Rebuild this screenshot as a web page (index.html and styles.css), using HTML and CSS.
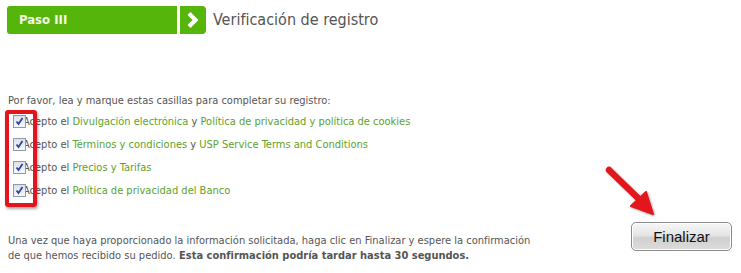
FILE: index.html
```html
<!DOCTYPE html>
<html lang="es">
<head>
<meta charset="utf-8">
<link rel="stylesheet" href="styles.css">
</head>
<body>
<div class="page">
  <div class="step">
    <div class="step-label">Paso III</div>
    <div class="step-arrow">
      <svg width="26" height="28" viewBox="0 0 26 28"><path d="M9 7.5 L15.5 14 L9 20.5" fill="none" stroke="#fff" stroke-width="4.2" stroke-linecap="butt" stroke-linejoin="miter"/></svg>
    </div>
    <div class="step-title">Verificación de registro</div>
  </div>

  <p class="intro">Por favor, lea y marque estas casillas para completar su registro:</p>
  <div class="checks">
    <label class="row"><span class="cb"><svg width="11" height="11" viewBox="0 0 11 11"><path d="M2.5 5.5 L4.5 8 L8.5 2" fill="none" stroke="#2a45a0" stroke-width="1.8"/></svg></span>Acepto el <a>Divulgación electrónica</a> y <a>Política de privacidad y política de cookies</a></label>
    <label class="row"><span class="cb"><svg width="11" height="11" viewBox="0 0 11 11"><path d="M2.5 5.5 L4.5 8 L8.5 2" fill="none" stroke="#2a45a0" stroke-width="1.8"/></svg></span>Acepto el <a>Términos y condiciones</a> y <a>USP Service Terms and Conditions</a></label>
    <label class="row"><span class="cb"><svg width="11" height="11" viewBox="0 0 11 11"><path d="M2.5 5.5 L4.5 8 L8.5 2" fill="none" stroke="#2a45a0" stroke-width="1.8"/></svg></span>Acepto el <a>Precios y Tarifas</a></label>
    <label class="row"><span class="cb"><svg width="11" height="11" viewBox="0 0 11 11"><path d="M2.5 5.5 L4.5 8 L8.5 2" fill="none" stroke="#2a45a0" stroke-width="1.8"/></svg></span>Acepto el <a>Política de privacidad del Banco</a></label>
    <div class="redbox"></div>
  </div>

  <div class="footer">
    <p class="note">Una vez que haya proporcionado la información solicitada, haga clic en Finalizar y espere la confirmación de que hemos recibido su pedido.<b> Esta confirmación podría tardar hasta 30 segundos.</b></p>
    <button class="finish">Finalizar</button>
    <svg class="arrow" width="60" height="60" viewBox="0 0 60 60">
      <defs><filter id="sh" x="-20%" y="-20%" width="140%" height="140%"><feDropShadow dx="1" dy="1" stdDeviation="1" flood-color="#000" flood-opacity="0.35"/></filter></defs>
      <g filter="url(#sh)">
        <path d="M6 6 L38 37" stroke="#e3131b" stroke-width="6.5" stroke-linecap="round"/>
        <path d="M28 42 L50 50 L43 28 Z" fill="#e3131b" stroke="#e3131b" stroke-width="2" stroke-linejoin="round"/>
      </g>
    </svg>
  </div>
</div>
</body>
</html>
```
FILE: styles.css
```css
* { box-sizing: border-box; }
html, body { margin: 0; padding: 0; background: #fff; }
body { font-family: "DejaVu Sans Condensed", "DejaVu Sans", sans-serif; color: #555; font-size: 11px; }
.page { position: relative; width: 741px; height: 273px; padding: 6px 0 0 7px; }
.step { display: flex; align-items: center; height: 28px; }
.step-label {
  width: 170px; height: 28px; background: #55b50b; color: #f4fbe0;
  font-family: "DejaVu Sans Condensed", sans-serif; font-weight: bold; font-size: 13px;
  line-height: 28px; padding-left: 12px; border-radius: 3px 0 0 3px;
}
.step-arrow {
  margin-left: 3px; width: 26px; height: 28px; background: #55b50b;
  border-radius: 0 4px 4px 0; display: flex;
}
.step-title { margin-left: 7px; font-size: 16px; color: #555; line-height: 28px; }
.intro { margin: 60px 0 0 1px; line-height: 14px; }
.checks { position: relative; margin-top: 2px; }
.row { display: flex; align-items: center; height: 23px; white-space: pre; }
.row a { color: #5ba22b; text-decoration: none; }
.cb {
  width: 13px; height: 13px; margin: 0 -3px 0 6px; border: 1px solid #8e9aac;
  background: linear-gradient(#dde1e8, #f7f8fa); position: relative; flex: none; display: flex;
}
.redbox {
  position: absolute; left: -2px; top: 0px; width: 32px; height: 97px;
  border: 4px solid #e3141b; border-radius: 3px; box-shadow: 1px 2px 3px rgba(0,0,0,0.35);
}
.footer { position: relative; display: flex; align-items: flex-start; margin-top: 20px; }
.note { margin: 11px 0 0 1px; width: 540px; padding-right: 12px; line-height: 15px; }
.note b { font-weight: bold; }
.finish {
  margin: 0 0 0 83px; width: 101px; height: 29px; border: 1px solid #8b8b8b; border-radius: 5px;
  background: linear-gradient(#f6f6f6 0%, #e6e6e6 45%, #d0d0d0 55%, #dcdcdc 100%);
  font-family: "Liberation Sans", Arial, sans-serif; font-size: 15px; color: #111;
  box-shadow: inset 0 0 0 1px #fff;
}
.arrow { position: absolute; left: 596px; top: -58px; }
```
